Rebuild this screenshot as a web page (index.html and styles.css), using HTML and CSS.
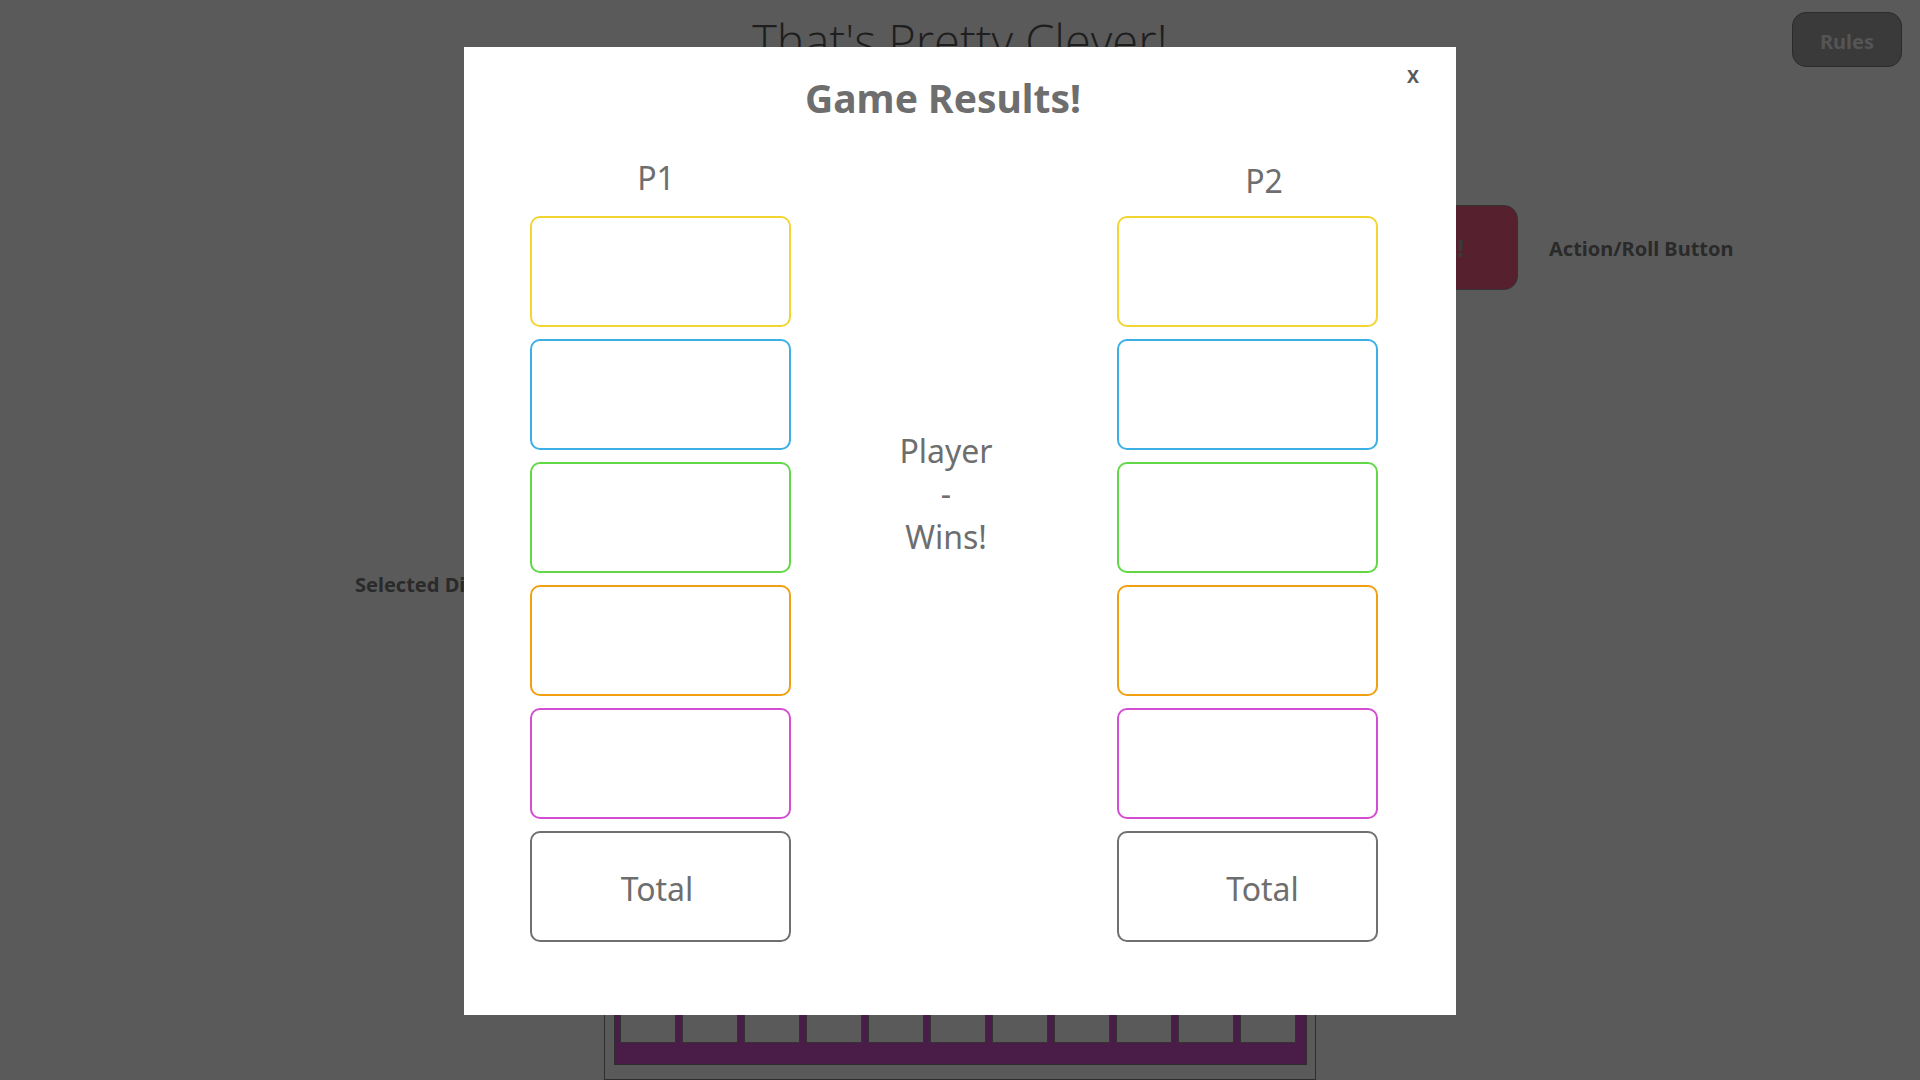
FILE: index.html
```html
<!DOCTYPE html>
<html lang="en">
<head>
<meta charset="utf-8">
<title>That's Pretty Clever!</title>
<link rel="stylesheet" href="styles.css">
</head>
<body>
<div class="page">
  <header class="topbar">
    <h1 class="app-title">That's Pretty Clever!</h1>
    <button class="rules-btn">Rules</button>
  </header>
  <div class="action-row">
    <button class="action-btn">Roll!</button>
    <span class="bg-label">Action/Roll Button</span>
  </div>
  <div class="dice-row">
    <span class="bg-label">Selected Dice</span>
  </div>
  <div class="track">
    <div class="track-inner">
      <div class="cell"></div><div class="cell"></div><div class="cell"></div><div class="cell"></div>
      <div class="cell"></div><div class="cell"></div><div class="cell"></div><div class="cell"></div>
      <div class="cell"></div><div class="cell"></div><div class="cell"></div>
    </div>
  </div>
</div>

<div class="modal">
  <button class="close-btn">X</button>
  <h2 class="modal-title">Game Results!</h2>
  <div class="cols">
    <div class="player-col">
      <div class="player-label p1">P1</div>
      <div class="score yellow"></div>
      <div class="score blue"></div>
      <div class="score green"></div>
      <div class="score orange"></div>
      <div class="score magenta"></div>
      <div class="score total"><span class="total-text p1">Total</span></div>
    </div>
    <div class="winner">
      <div>Player</div>
      <div>-</div>
      <div>Wins!</div>
    </div>
    <div class="player-col">
      <div class="player-label p2">P2</div>
      <div class="score yellow"></div>
      <div class="score blue"></div>
      <div class="score green"></div>
      <div class="score orange"></div>
      <div class="score magenta"></div>
      <div class="score total"><span class="total-text p2">Total</span></div>
    </div>
  </div>
</div>
</body>
</html>
```
FILE: styles.css
```css
* { box-sizing: border-box; }
html, body { margin: 0; padding: 0; }
body {
  background: #5a5a5a;
  font-family: "Segoe UI", "Noto Sans", "Open Sans", sans-serif;
  width: 1920px;
  height: 1080px;
  overflow: hidden;
}

/* Background page (dimmed under overlay) */
.page {
  height: 1080px;
  display: flex;
  flex-direction: column;
}
.topbar {
  display: grid;
  grid-template-columns: 1fr auto 1fr;
  align-items: start;
  height: 80px;
}
.app-title {
  grid-column: 2;
  margin: 11px 0 0 0;
  font-weight: 300;
  font-size: 47px;
  line-height: 60px;
  color: #1e1e1e;
  font-family: "Open Sans", "Noto Sans", sans-serif;
}
.rules-btn {
  grid-column: 3;
  justify-self: end;
  margin: 12px 18px 0 0;
  width: 110px;
  height: 55px;
  background: #3a3a3a;
  border: 1px solid #2b2b2b;
  border-radius: 14px;
  color: #555555;
  font-family: inherit;
  font-weight: 700;
  font-size: 20px;
  padding: 4px 0 0 0;
}
.action-row {
  display: flex;
  align-items: center;
  margin-top: 125px;
  padding-left: 1358px;
  gap: 31px;
}
.action-btn {
  width: 160px;
  height: 85px;
  background: #57202f;
  border: 1px solid #333;
  border-radius: 14px;
  color: #3a3a3a;
  font-family: inherit;
  font-weight: 700;
  font-size: 24px;
}
.bg-label {
  font-weight: 700;
  font-size: 20px;
  line-height: 24px;
  color: #2a2a2a;
}
.action-row .bg-label { margin-top: 2px; }
.dice-row {
  margin-top: 283px;
  padding-left: 355px;
}
.track {
  margin-top: auto;
  margin-left: 604px;
  width: 712px;
  border: 1px solid #2e2e2e;
  border-top: none;
  padding: 0 8px 14px 9px;
}
.track-inner {
  background: #4a1c48;
  border: 1px solid #2e2e2e;
  border-top: none;
  height: 110px;
  display: flex;
  gap: 6px;
  padding: 0 0 0 5px;
  align-items: flex-start;
}
.cell {
  width: 56px;
  height: 88px;
  background: #5a5a5a;
  border: 1px solid #333;
  border-top: none;
}

/* Modal */
.modal {
  position: fixed;
  left: 464px;
  top: 47px;
  width: 992px;
  height: 968px;
  background: #ffffff;
  padding: 27px 0 0 66px;
}
.close-btn {
  position: absolute;
  top: 19px;
  right: 37px;
  background: none;
  border: none;
  padding: 0;
  font-family: inherit;
  font-weight: 700;
  font-size: 18px;
  line-height: 20px;
  color: #5a5a5a;
}
.modal-title {
  margin: 0 34px 0 -66px;
  text-align: center;
  font-size: 39px;
  line-height: 48px;
  font-weight: 700;
  color: #6e6e6e;
}
.cols {
  display: grid;
  grid-template-columns: 261px 326px 261px;
  margin-top: 36px;
  align-items: start;
}
.player-col {
  display: flex;
  flex-direction: column;
  gap: 12px;
}
.player-label {
  height: 46px;
  padding-top: 1px;
  font-size: 32px;
  line-height: 38px;
  color: #6e6e6e;
  text-align: center;
}
.player-label.p1 { padding-right: 9px; }
.player-label.p2 { padding-left: 33px; padding-top: 4px; }
.score {
  height: 111px;
  border: 2px solid #707070;
  border-radius: 10px;
}
.yellow { border-color: #f2d530; }
.blue { border-color: #3cb0e5; }
.green { border-color: #62d849; }
.orange { border-color: #f0a010; }
.magenta { border-color: #d44ed4; }
.total {
  display: flex;
  align-items: center;
  justify-content: center;
  font-size: 32px;
  color: #6e6e6e;
  padding-top: 4px;
}
.total-text.p1 { margin-right: 7px; }
.total-text.p2 { margin-left: 30px; }
.winner {
  padding: 271px 16px 0 0;
  text-align: center;
  font-size: 32px;
  line-height: 43px;
  color: #6e6e6e;
}
```
